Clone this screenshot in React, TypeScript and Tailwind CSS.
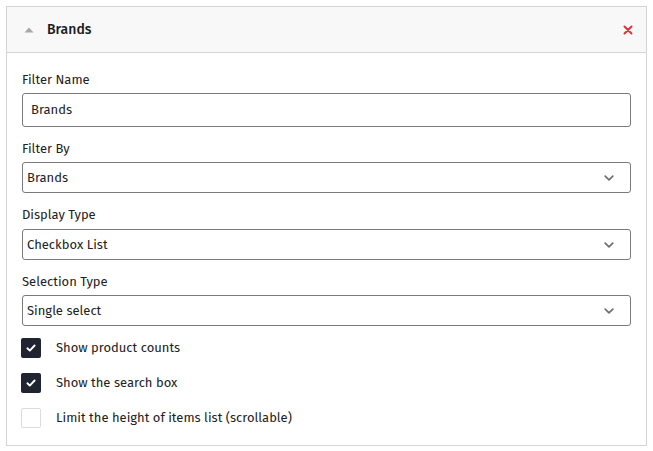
import React from "react";

const font = { fontFamily: '"Fira Sans", "Noto Sans", "Open Sans", sans-serif' };

function Chevron() {
    return (
        <svg width="10" height="6" viewBox="0 0 10 6" className="text-[#6b6f78]">
            <path d="M1.2 1.2l3.8 3.6 3.8-3.6" fill="none" stroke="currentColor" strokeWidth="1.7" strokeLinecap="round" strokeLinejoin="round" />
        </svg>
    );
}

function SelectBox({ value }: { value: string }) {
    return (
        <div className="h-[31px] flex items-center justify-between border border-[#7a7a7a] rounded-[3px] pl-[4px] pr-[16px] text-[13px] text-[#222]">
            <span>{value}</span>
            <Chevron />
        </div>
    );
}

function Check({ checked, label }: { checked: boolean; label: string }) {
    return (
        <div className="flex items-center h-[20px]">
            {checked ? (
                <div className="w-[20px] h-[20px] rounded-[2px] bg-[#1f2430] flex items-center justify-center">
                    <svg width="10" height="8" viewBox="0 0 10 8">
                        <path d="M1.4 4.3l2.4 2.3 4.8-5.1" fill="none" stroke="#fff" strokeWidth="1.9" strokeLinecap="round" strokeLinejoin="round" />
                    </svg>
                </div>
            ) : (
                <div className="w-[20px] h-[20px] rounded-[2px] border border-[#dcdcdc] bg-white" />
            )}
            <span className="ml-[15px] text-[13px] text-[#222]">{label}</span>
        </div>
    );
}

export default function App() {
    return (
        <div className="w-[653px] h-[451px] bg-white p-[6px]" style={font}>
            <div className="border border-[#d3d3d8] bg-white h-[440px]">
                <div className="h-[46px] bg-[#f8f8f8] border-b border-[#d3d3d8] flex items-center pl-[17px] pr-[13px]">
                    <svg width="10" height="6" viewBox="0 0 10 6">
                        <path d="M5 0.5L9.5 5.5H0.5z" fill="#a8a8a8" />
                    </svg>
                    <span className="ml-[13px] text-[14px] font-medium text-[#1b1b1b]">Brands</span>
                    <div className="flex-1" />
                    <svg width="10" height="10" viewBox="0 0 10 10">
                        <path d="M1.5 1.5l7 7M8.5 1.5l-7 7" stroke="#e0343c" strokeWidth="2" strokeLinecap="round" />
                    </svg>
                </div>
                <div className="px-[15px] pt-[18px]">
                    <div className="text-[13px] text-[#222] leading-[17px]">Filter Name</div>
                    <div className="mt-[5px] h-[34px] flex items-center border border-[#7a7a7a] rounded-[3px] pl-[8px] text-[13px] text-[#222]">Brands</div>

                    <div className="mt-[13px] text-[13px] text-[#222] leading-[17px]">Filter By</div>
                    <div className="mt-[5px]"><SelectBox value="Brands" /></div>

                    <div className="mt-[13px] text-[13px] text-[#222] leading-[17px]">Display Type</div>
                    <div className="mt-[6px]"><SelectBox value="Checkbox List" /></div>

                    <div className="mt-[13px] text-[13px] text-[#222] leading-[17px]">Selection Type</div>
                    <div className="mt-[5px]"><SelectBox value="Single select" /></div>

                    <div className="mt-[12px] flex flex-col gap-[15px] -ml-[1px]">
                        <Check checked label="Show product counts" />
                        <Check checked label="Show the search box" />
                        <Check checked={false} label="Limit the height of items list (scrollable)" />
                    </div>
                </div>
            </div>
        </div>
    );
}
